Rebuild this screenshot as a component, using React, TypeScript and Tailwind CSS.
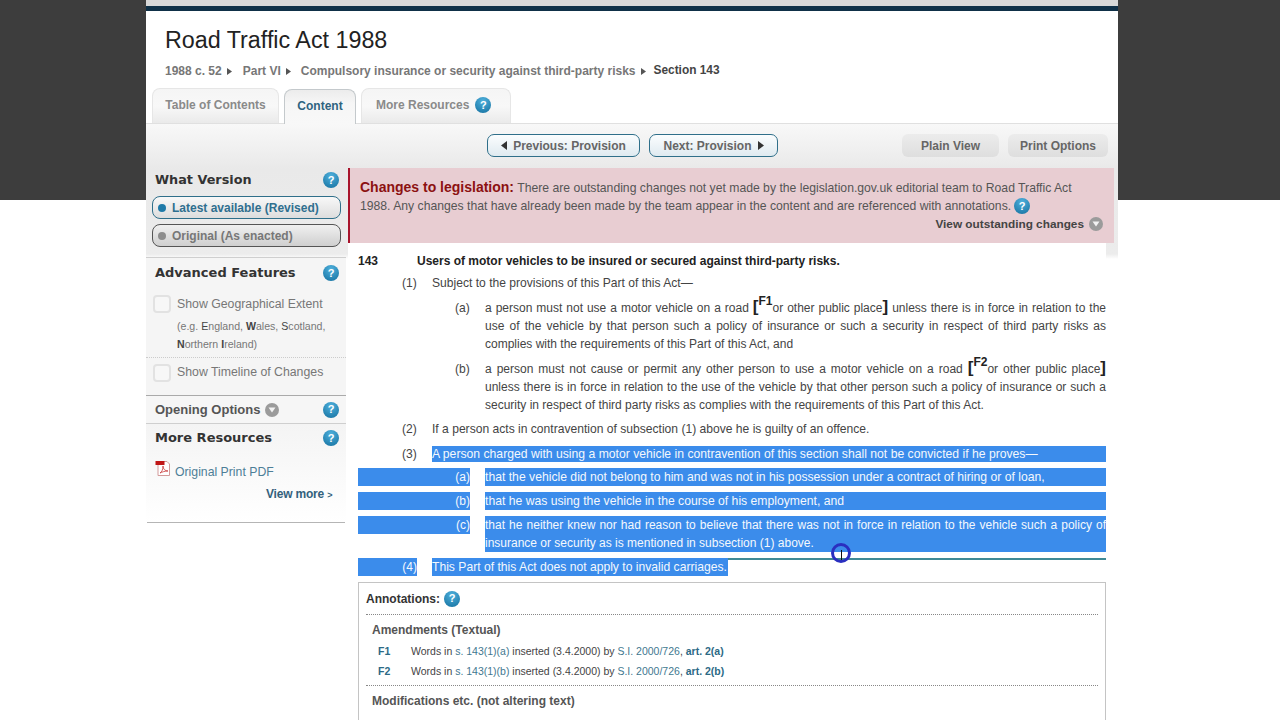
const Help = ({ className = "" }: { className?: string }) => (
  <span className={`inline-flex w-4 h-4 shrink-0 rounded-full bg-[radial-gradient(circle_at_50%_25%,#4fb0dc,#14709f)] text-white text-[11px] font-bold items-center justify-center leading-none ${className}`}>?</span>
);
const Down = ({ className = "" }: { className?: string }) => (
  <span className={`inline-flex w-[14px] h-[14px] rounded-full bg-[#9b9b9b] items-center justify-center ${className}`}>
    <svg width="8" height="6" viewBox="0 0 8 6"><path d="M0.5 0.5h7L4 5.5z" fill="#f2f2f2" /></svg>
  </span>
);
const Tri = ({ dir, size = 6 }: { dir: "l" | "r"; size?: number }) => (
  <svg width={size} height={size + 3} viewBox="0 0 6 9" className="inline-block">
    <path d={dir === "r" ? "M0 0l6 4.5L0 9z" : "M6 0L0 4.5 6 9z"} fill="#333" />
  </svg>
);
const Crumb = ({ children }: { children: React.ReactNode }) => (
  <span className="inline-flex items-center gap-[5px]">{children}<svg width="5" height="7" viewBox="0 0 5 7"><path d="M0 0l5 3.5L0 7z" fill="#555" /></svg></span>
);
const Tab = ({ children, active, w }: { children: React.ReactNode; active?: boolean; w: string }) => (
  <div className={`${w} ${active ? "h-[35px] border-[#c4c9cc] bg-[linear-gradient(#ececec,#f6f6f6_40%,#f8f8f8)] text-[#2f6480] -mb-px" : "h-[35px] border-[#e6e6e6] bg-[linear-gradient(#f5f5f5,#f8f8f8_50%,#eaeaea)] text-[#8a8a8a]"} border border-b-0 rounded-t-[8px] flex items-center justify-center gap-[6px] pb-[2px] font-bold text-[12px]`}>{children}</div>
);
const Outline = ({ children, w }: { children: React.ReactNode; w: string }) => (
  <div className={`${w} h-[23px] rounded-[7px] border border-[#2f6f8a] bg-[linear-gradient(#fbfdfe,#dfeaf0)] flex items-center justify-center gap-[6px] font-bold text-[12px] text-[#666]`}>{children}</div>
);
const Grey = ({ children, w }: { children: React.ReactNode; w: string }) => (
  <div className={`${w} h-[23px] rounded-[6px] bg-[linear-gradient(#ececec,#dedede)] flex items-center justify-center font-bold text-[12px] text-[#666]`}>{children}</div>
);
const Check = () => <span className="w-[18px] h-[18px] shrink-0 rounded-[4px] border-2 border-[#e2e2e2] bg-[#f7f7f7]" />;

const Sel = "bg-[#3b8ceb] text-[#f4f8fd]";

const Row = ({ label, text, className = "" }: { label: string; text: React.ReactNode; className?: string }) => (
  <div className={`flex ${className}`}>
    <div className={`w-[112px] h-[18px] ${Sel} shrink-0 text-right text-[12px]`}>{label}</div>
    <div className={`flex-1 ml-[15px] text-justify ${Sel}`}>{text}</div>
  </div>
);
const F = ({ n }: { n: string }) => (
  <><span className="text-[17px] font-bold text-[#222] leading-[12px]">[</span><sup className="text-[12px] font-bold text-[#222] leading-[0] align-[1px]">{n}</sup></>
);
const Close = () => <span className="text-[17px] font-bold text-[#222] leading-[12px]">]</span>;
const Lnk = ({ children }: { children: React.ReactNode }) => <span className="text-[#3f7890]">{children}</span>;
const Art = ({ children }: { children: React.ReactNode }) => <span className="font-bold text-[#2c6a86]">{children}</span>;

export default function App() {
  return (
    <div className="h-[720px] overflow-hidden bg-[linear-gradient(#3d3d3d_200px,#ffffff_200px)] font-['Liberation_Sans',Arial,sans-serif] text-[12px] text-[#444]">
      <div className="ml-[146px] w-[972px] h-[720px] bg-white">
        <div className="h-[6px] bg-[#d8d8d8]" />
        <div className="h-[5px] bg-[#0f3047]" />
        <div className="pl-[19px] pt-[15px]">
          <h1 className="text-[23.3px] leading-[28px] text-[#222]">Road Traffic Act 1988</h1>
          <div className="mt-[8px] h-[18px] flex items-center font-bold text-[12px] text-[#777]">
            <Crumb>1988 c. 52</Crumb>
            <span className="ml-[11px]"><Crumb>Part VI</Crumb></span>
            <span className="ml-[10px]"><Crumb>Compulsory insurance or security against third-party risks</Crumb></span>
            <span className="ml-[8px] text-[#444] text-[11.9px]">Section 143</span>
          </div>
        </div>
        <div className="mt-[8px] pl-[6px] flex gap-[5px] items-end h-[35px]">
          <Tab w="w-[127px]">Table of Contents</Tab>
          <Tab w="w-[72px]" active>Content</Tab>
          <Tab w="w-[150px] !justify-start pl-[14px]">More Resources <Help /></Tab>
        </div>
        <div className="flex h-[597px] border-t border-t-[#e0e0e0] bg-[linear-gradient(#f8f8f8,#e9e9e9_45px,#ececec_130px,#ffffff_135px)]">
          <div className="w-[200px] shrink-0">
            <div className="pt-[48px] pl-[6px] pr-[5px]">
              <div className="flex items-center justify-between pl-[3px] pr-[2px] h-[16px]">
                <span className="font-['DejaVu_Sans',sans-serif] font-bold text-[12.8px] text-[#333]">What Version</span>
                <Help />
              </div>
              <div className="mt-[8px] h-[23px] w-[189px] rounded-[8px] border border-[#2f6f8a] bg-[linear-gradient(#f8f8f8,#dddddd)] flex items-center pl-[5px] gap-[6px] font-bold text-[#2f6f8f]">
                <span className="w-[8px] h-[8px] rounded-full bg-[#1f7aa8]" />Latest available (Revised)
              </div>
              <div className="mt-[5px] h-[23px] w-[189px] rounded-[8px] border border-[#555] bg-[linear-gradient(#f0f0f0,#cfcfcf)] flex items-center pl-[5px] gap-[6px] font-bold text-[#777]">
                <span className="w-[8px] h-[8px] rounded-full bg-[#8d8d8d]" />Original (As enacted)
              </div>
            </div>
            <div className="mt-[10px] border-t border-[#cfcfcf] bg-[#f5f5f5]">
              <div className="flex items-center justify-between pl-[9px] pr-[7px] pt-[6px] h-[24px]">
                <span className="font-['DejaVu_Sans',sans-serif] font-bold text-[13px] text-[#333]">Advanced Features</span>
                <Help />
              </div>
              <div className="flex items-center pl-[7px] mt-[12px] gap-[6px] h-[20px]">
                <Check /><span className="text-[12.3px] text-[#777]">Show Geographical Extent</span>
              </div>
              <div className="pl-[31px] pr-[10px] mt-[3px] text-[10.6px] leading-[18px] text-[#777]">
                (e.g. <b className="font-normal text-[#444]">E</b>ngland, <b className="text-[#444]">W</b>ales, <b className="font-normal text-[#444]">S</b>cotland,<br /><b className="text-[#444]">N</b>orthern <b className="text-[#444]">I</b>reland)
              </div>
              <div className="mt-[4px] border-t border-dotted border-[#cccccc] flex items-center pl-[7px] gap-[6px] h-[30px]">
                <Check /><span className="text-[12.3px] text-[#777]">Show Timeline of Changes</span>
              </div>
              <div className="h-[8px]" />
            </div>
            <div className="border-t border-[#aaaaaa] bg-[#f6f6f6] h-[28px] flex items-center pl-[9px] pr-[7px] justify-between">
              <span className="flex items-center gap-[5px] font-bold text-[13px] text-[#555]">Opening Options <Down /></span>
              <Help />
            </div>
            <div className="border-t border-[#cfcfcf] bg-[linear-gradient(#f4f4f4,#ffffff)]">
              <div className="flex items-center justify-between pl-[9px] pr-[7px] pt-[6px] h-[22px]">
                <span className="font-['DejaVu_Sans',sans-serif] font-bold text-[13px] text-[#333]">More Resources</span>
                <Help />
              </div>
              <div className="flex items-start pl-[9px] mt-[17px] h-[18px]">
                <svg width="17" height="17" viewBox="0 0 17 17" className="-mt-[3px]">
                  <path d="M3 1.5h9l2.5 2.5v11.5H3z" fill="#fff" stroke="#d39a9a" />
                  <rect x="0.5" y="1" width="9" height="4" fill="#c01616" />
                  <path d="M5 13c2-1 3-4 3-7 0 3 2 5 5 5-3 0-6 1-8 2z" fill="none" stroke="#c83a3a" strokeWidth="0.8" />
                </svg>
                <span className="ml-[3px] text-[12.25px] text-[#4d7e97]">Original Print PDF</span>
              </div>
              <div className="mt-[4px] pl-[120px] font-bold tracking-[-0.2px] text-[#33617c] h-[18px]">View more <span className="text-[9px]">&gt;</span></div>
              <div className="mt-[19px] ml-[1px] mr-[1px] border-b border-[#b5b5b5]" />
            </div>
          </div>
          <div className="w-[770px] ml-[2px]">
            <div className="h-[44px] pl-[139px] pt-[10px] flex items-start">
              <div className="flex gap-[9px]">
                <Outline w="w-[153px]"><Tri dir="l" />Previous: Provision</Outline>
                <Outline w="w-[129px]">Next: Provision <Tri dir="r" /></Outline>
              </div>
              <div className="ml-[124px] flex gap-[9px]">
                <Grey w="w-[97px]">Plain View</Grey>
                <Grey w="w-[100px]">Print Options</Grey>
              </div>
            </div>
            <div className="h-[75px] w-[766px] border-l-2 border-[#a8142c] bg-[#e8cdd2] pl-[10px] pr-[8px] pt-[10px] text-[12.2px] leading-[18px] text-[#555]">
              <div className="whitespace-nowrap"><span className="font-bold text-[14px] text-[#8c1111]">Changes to legislation:</span> There are outstanding changes not yet made by the legislation.gov.uk editorial team to Road Traffic Act</div>
              <div className="flex items-center gap-[3px] whitespace-nowrap">1988. Any changes that have already been made by the team appear in the content and are referenced with annotations. <Help /></div>
              <div className="flex items-center justify-end gap-[5px] pr-[3px] font-bold text-[11.8px] text-[#444]">View outstanding changes <Down /></div>
            </div>
            <div className="relative pl-[10px] w-[758px] h-[490px] bg-white text-[12.1px] leading-[18px] text-[#444]">
              <div className="flex pt-[9px] font-bold text-[12px] text-[#222]">
                <div className="w-[59px] shrink-0">143</div>
                <div>Users of motor vehicles to be insured or secured against third-party risks.</div>
              </div>
              <div className="flex mt-[4px]">
                <div className="w-[44px] shrink-0" />
                <div className="w-[30px] shrink-0">(1)</div>
                <div>Subject to the provisions of this Part of this Act—</div>
              </div>
              <div className="flex mt-[7px]">
                <div className="w-[97px] shrink-0" />
                <div className="w-[30px] shrink-0">(a)</div>
                <div className="flex-1 text-justify text-[12px]">a person must not use a motor vehicle on a road <F n="F1" />or other public place<Close /> unless there is in force in relation to the use of the vehicle by that person such a policy of insurance or such a security in respect of third party risks as complies with the requirements of this Part of this Act, and</div>
              </div>
              <div className="flex mt-[7px]">
                <div className="w-[97px] shrink-0" />
                <div className="w-[30px] shrink-0">(b)</div>
                <div className="flex-1 text-justify text-[12px]">a person must not cause or permit any other person to use a motor vehicle on a road <F n="F2" />or other public place<Close /> unless there is in force in relation to the use of the vehicle by that other person such a policy of insurance or such a security in respect of third party risks as complies with the requirements of this Part of this Act.</div>
              </div>
              <div className="flex mt-[6px]">
                <div className="w-[44px] shrink-0" />
                <div className="w-[30px] shrink-0">(2)</div>
                <div>If a person acts in contravention of subsection (1) above he is guilty of an offence.</div>
              </div>
              <div className="flex mt-[8px]">
                <div className="w-[44px] shrink-0" />
                <div className="w-[30px] shrink-0 leading-[16px]">(3)</div>
                <div className={`flex-1 h-[16px] leading-[16px] text-[12.2px] ${Sel}`}>A person charged with using a motor vehicle in contravention of this section shall not be convicted if he proves—</div>
              </div>
              <Row className="mt-[6px] text-[12.2px]" label="(a)" text="that the vehicle did not belong to him and was not in his possession under a contract of hiring or of loan," />
              <Row className="mt-[6px] text-[12.2px]" label="(b)" text="that he was using the vehicle in the course of his employment, and" />
              <Row className="mt-[6px] text-[12px]" label="(c)" text="that he neither knew nor had reason to believe that there was not in force in relation to the vehicle such a policy of insurance or security as is mentioned in subsection (1) above." />
              <div className="flex mt-[6px]">
                <div className={`w-[59px] shrink-0 text-right text-[12px] ${Sel}`}>(4)</div>
                <div className="ml-[15px] flex-1 bg-[linear-gradient(#3f8a96_2px,transparent_2px)]"><span className={`inline-block pr-[1px] text-[12.15px] ${Sel}`}>This Part of this Act does not apply to invalid carriages.</span></div>
              </div>
              <div className="absolute left-[483px] top-[300px] w-[20px] h-[20px] rounded-full border-[3px] border-[#2a2fc0] flex items-center justify-center">
                <span className="w-[1px] h-[10px] bg-[#111] mt-[3px]" />
              </div>
              <div className="mt-[6px] border border-[#c4c4c4] h-[200px] pl-[7px] pr-[7px] text-[12px]">
                <div className="flex items-center gap-[4px] h-[31px] font-bold text-[#333]">Annotations: <Help /></div>
                <div className="border-t border-dotted border-[#888]" />
                <div className="pl-[6px] mt-[6px] font-bold text-[#555] h-[18px]">Amendments (Textual)</div>
                <div className="flex pl-[12px] mt-[2px] text-[10.5px] h-[20px] items-center">
                  <span className="w-[33px] font-bold text-[#2c6a86]">F1</span>
                  <span>Words in <Lnk>s. 143(1)(a)</Lnk> inserted (3.4.2000) by <Lnk>S.I. 2000/726</Lnk>, <Art>art. 2(a)</Art></span>
                </div>
                <div className="flex pl-[12px] text-[10.5px] h-[20px] items-center">
                  <span className="w-[33px] font-bold text-[#2c6a86]">F2</span>
                  <span>Words in <Lnk>s. 143(1)(b)</Lnk> inserted (3.4.2000) by <Lnk>S.I. 2000/726</Lnk>, <Art>art. 2(b)</Art></span>
                </div>
                <div className="border-t border-dotted border-[#888] mt-[4px]" />
                <div className="pl-[6px] mt-[6px] font-bold text-[#555] h-[18px]">Modifications etc. (not altering text)</div>
                <div className="flex pl-[12px] mt-[5px] text-[10.5px] items-center whitespace-nowrap overflow-hidden">
                  <span className="w-[33px] font-bold text-[#2c6a86]">C1</span>
                  <span>S. 143 modified by Transport Act 1978 (c. 55, SIF 11:2), ss. 1(5), 9, Sch. 1 para. 4(4) (as amended by Road Traffic (Consequential Provisions) Act 1988</span>
                </div>
              </div>
            </div>
          </div>
        </div>
      </div>
    </div>
  );
}
